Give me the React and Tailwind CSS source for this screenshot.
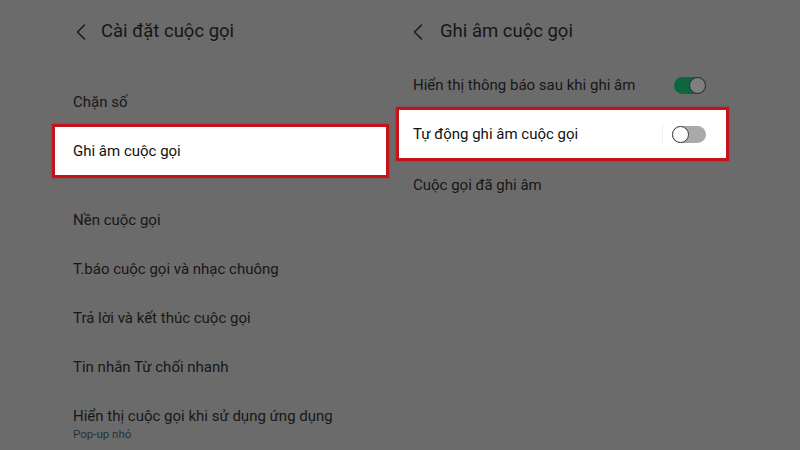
import React from 'react'

const font = { fontFamily: 'Roboto, "Noto Sans", sans-serif' }

function Back() {
  return (
    <svg width="12" height="18" viewBox="0 0 12 18" className="shrink-0">
      <path d="M9.5 2 L2.5 9 L9.5 16" fill="none" stroke="#1c1c1c" strokeWidth="1.6" strokeLinecap="round" strokeLinejoin="round" />
    </svg>
  )
}

function Toggle({ on }) {
  return on ? (
    <div className="relative w-[32px] h-[17px]">
      <div className="absolute inset-0 rounded-full bg-[#0d6640]" />
      <div className="absolute right-0 top-0 w-[17px] h-[17px] rounded-full bg-[#7e7e7e] border-[1.5px] border-[#2a2a2a]" />
    </div>
  ) : (
    <div className="relative w-[34px] h-[17px]">
      <div className="absolute inset-0 rounded-full bg-[#a9a9a9]" />
      <div className="absolute left-0 top-0 w-[17px] h-[17px] rounded-full bg-white border-[1.5px] border-[#3a3a3a]" />
    </div>
  )
}

function Row({ children, h = 'h-[49px]' }) {
  return <div className={`${h} flex items-center text-[15px] text-[#171717]`}>{children}</div>
}

export default function App() {
  return (
    <div className="w-[800px] h-[450px] bg-[#6b6b6b] overflow-hidden flex pl-[52px] gap-[7px]" style={font}>
      {/* left panel */}
      <div className="w-[337px] flex flex-col">
        <div className="h-[64px] flex items-center gap-[14px] pl-[23px]">
          <Back />
          <span className="text-[18.5px] text-[#161616]">Cài đặt cuộc gọi</span>
        </div>
        <div className="h-[16px]" />
        <div className="h-[44px] flex items-center pl-[21px] text-[15px] text-[#171717]">Chặn số</div>
        <div className="h-[54px] bg-white border-[3px] border-[#c4141b] flex items-center pl-[18px] text-[15px] text-[#111] shadow-[0_0_2px_rgba(200,20,27,0.6)]">
          Ghi âm cuộc gọi
        </div>
        <div className="h-[18px]" />
        <div className="pl-[21px]">
          <Row>Nền cuộc gọi</Row>
          <Row>T.báo cuộc gọi và nhạc chuông</Row>
          <Row>Trả lời và kết thúc cuộc gọi</Row>
          <Row>Tin nhắn Từ chối nhanh</Row>
          <div className="pt-[15px]">
            <div className="text-[15px] leading-[18px] text-[#171717]">Hiển thị cuộc gọi khi sử dụng ứng dụng</div>
            <div className="text-[11.5px] leading-[19px] text-[#1e3440]">Pop-up nhỏ</div>
          </div>
        </div>
      </div>

      {/* right panel */}
      <div className="w-[333px] flex flex-col">
        <div className="h-[64px] flex items-center gap-[16px] pl-[16px]">
          <Back />
          <span className="text-[18.5px] text-[#161616]">Ghi âm cuộc gọi</span>
        </div>
        <div className="h-[43px] flex items-center justify-between pl-[17px] pr-[23px] text-[15px] text-[#171717]">
          <span>Hiển thị thông báo sau khi ghi âm</span>
          <Toggle on />
        </div>
        <div className="h-[54px] bg-white border-[3px] border-[#c4141b] flex items-center justify-between pl-[14px] pr-[20px] text-[15px] text-[#111] shadow-[0_0_2px_rgba(200,20,27,0.6)]">
          <span>Tự động ghi âm cuộc gọi</span>
          <div className="flex items-center gap-[9px]">
            <div className="w-px h-[20px] bg-[#f0f0f0]" />
            <Toggle />
          </div>
        </div>
        <div className="h-[48px] flex items-center pl-[17px] text-[15px] text-[#171717]">Cuộc gọi đã ghi âm</div>
      </div>
    </div>
  )
}
